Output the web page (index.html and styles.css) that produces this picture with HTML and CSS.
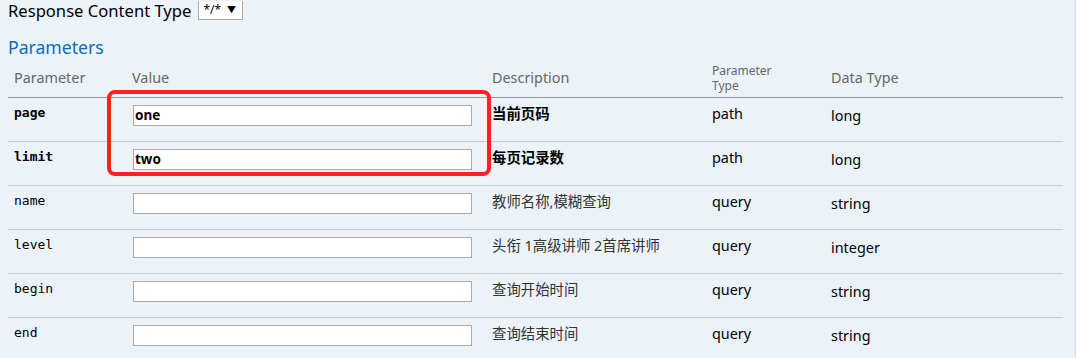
FILE: index.html
```html
<!DOCTYPE html>
<html lang="en">

<head>
  <meta charset="UTF-8">
  <title>Parameters</title>
  <link rel="stylesheet" href="styles.css">
</head>

<body>
  <div class="content">
    <div class="response-type">
      <label>Response Content Type</label>
      <span class="select">*/* <span class="arrow">&#9660;</span></span>
    </div>

    <h4>Parameters</h4>

    <div class="params-wrap">
      <table class="params">
        <thead>
          <tr>
            <th class="col-name">Parameter</th>
            <th class="col-value">Value</th>
            <th class="col-desc">Description</th>
            <th class="col-type"><div>Parameter</div><div>Type</div></th>
            <th class="col-data">Data Type</th>
          </tr>
        </thead>
        <tbody>
          <tr>
            <td class="code required">page</td>
            <td><input class="parameter required" type="text" value="one"></td>
            <td class="markdown required">当前页码</td>
            <td>path</td>
            <td><span class="model">long</span></td>
          </tr>
          <tr>
            <td class="code required">limit</td>
            <td><input class="parameter required" type="text" value="two"></td>
            <td class="markdown required">每页记录数</td>
            <td>path</td>
            <td><span class="model">long</span></td>
          </tr>
          <tr>
            <td class="code">name</td>
            <td><input class="parameter" type="text"></td>
            <td class="markdown">教师名称,模糊查询</td>
            <td>query</td>
            <td><span class="model">string</span></td>
          </tr>
          <tr>
            <td class="code">level</td>
            <td><input class="parameter" type="text"></td>
            <td class="markdown">头衔 1高级讲师 2首席讲师</td>
            <td>query</td>
            <td><span class="model">integer</span></td>
          </tr>
          <tr>
            <td class="code">begin</td>
            <td><input class="parameter" type="text"></td>
            <td class="markdown">查询开始时间</td>
            <td>query</td>
            <td><span class="model">string</span></td>
          </tr>
          <tr>
            <td class="code">end</td>
            <td><input class="parameter" type="text"></td>
            <td class="markdown">查询结束时间</td>
            <td>query</td>
            <td><span class="model">string</span></td>
          </tr>
        </tbody>
      </table>
      <!-- annotation box drawn over the required inputs -->
      <div class="highlight"></div>
    </div>
  </div>
</body>

</html>
```

FILE: styles.css
```css
body {
  margin: 0;
  font-family: "Noto Sans", "Noto Sans CJK SC", sans-serif;
  background: #ebf3f9;
}

.content {
  height: 358px;
  box-sizing: border-box;
  padding: 0 12px 0 8px;
  background-color: #ebf3f9;
  border-right: 1px solid #c3d9ec;
  overflow: hidden;
}

.response-type {
  display: flex;
  align-items: center;
  gap: 7px;
  height: 20px;
  font-size: 16.6px;
  color: #000;
}

.select {
  display: inline-flex;
  align-items: center;
  gap: 6px;
  height: 19px;
  box-sizing: border-box;
  padding: 0 6px 0 4px;
  background: #fff;
  border: 1px solid #aaa;
  border-top: none;
  font-size: 12px;
}

.select .arrow {
  font-size: 9px;
}

h4 {
  margin: 15px 0 0;
  height: 22px;
  font-size: 17.6px;
  font-weight: normal;
  color: #0f6ab4;
}

.params-wrap {
  position: relative;
  margin-top: 4px;
}

.params {
  width: 1055px;
  border-collapse: collapse;
  table-layout: fixed;
}

.params th {
  height: 36px;
  box-sizing: border-box;
  padding: 0 6px 2px;
  text-align: left;
  vertical-align: middle;
  font-size: 14.4px;
  font-weight: normal;
  line-height: 16px;
  color: #666;
  border-bottom: 1px solid #999;
}

.params th.col-type {
  font-size: 12px;
}

.col-type div {
  height: 15px;
  line-height: 16px;
}

.col-name { width: 118px; }
.col-value { width: 360px; }
.col-desc { width: 220px; }
.col-type { width: 119px; }

.params td {
  height: 44px;
  box-sizing: border-box;
  padding: 6px 6px 0;
  vertical-align: top;
  font-size: 14.4px;
  line-height: 20px;
  color: #000;
  border-bottom: 1px solid #ccc;
}

.params td.code {
  font-family: "DejaVu Sans Mono", monospace;
  font-size: 13px;
  line-height: 18px;
}

.params td.markdown {
  font-size: 14.4px;
  color: #333;
}

.params td.required {
  font-weight: bold;
  color: #000;
}

.model {
  display: inline-block;
  padding-top: 2px;
}

input.parameter {
  display: block;
  width: 339px;
  height: 21px;
  box-sizing: border-box;
  margin: 1px 0 0 1px;
  padding: 0 1px;
  border: 1px solid #aaa;
  background: #fff;
  font-family: "Noto Sans", sans-serif;
  font-size: 13.5px;
}

input.parameter.required {
  font-weight: bold;
}

.highlight {
  position: absolute;
  left: 99px;
  top: 29px;
  width: 384px;
  height: 86px;
  box-sizing: border-box;
  border: 4px solid #ff2020;
  border-radius: 8px;
}
```
